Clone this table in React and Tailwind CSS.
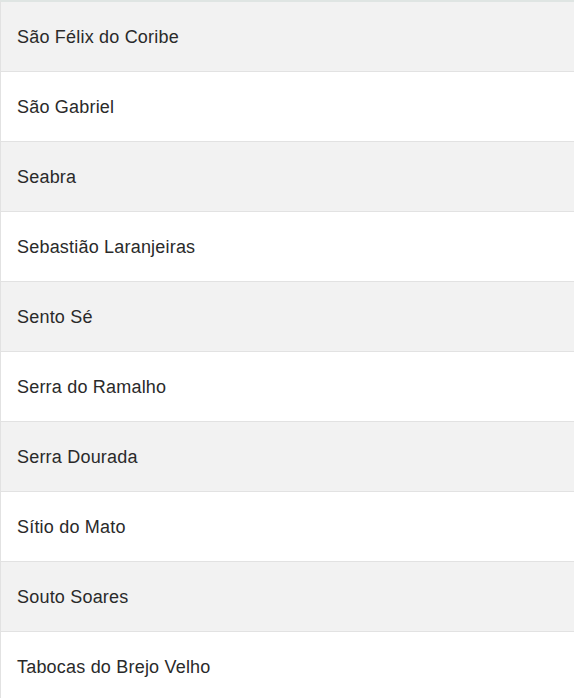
const cities = [
  'São Félix do Coribe',
  'São Gabriel',
  'Seabra',
  'Sebastião Laranjeiras',
  'Sento Sé',
  'Serra do Ramalho',
  'Serra Dourada',
  'Sítio do Mato',
  'Souto Soares',
  'Tabocas do Brejo Velho',
]

export default function App() {
  return (
    <div className="h-[698px] w-[574px] overflow-hidden bg-white font-['Liberation_Sans',Arial,sans-serif]">
      <div className="border-t-2 border-l border-t-[#dfe5e3] border-l-[#e2e2e2]">
        {cities.map((name, i) => (
          <div
            key={name}
            className={`flex h-[70px] items-center border-b border-[#e2e2e2] pl-[16px] pt-[2px] text-[18px] tracking-[0.2px] text-[#2a2a2a] ${
              i % 2 === 0 ? 'bg-[#f2f2f2]' : 'bg-white'
            }`}
          >
            {name}
          </div>
        ))}
      </div>
    </div>
  )
}
